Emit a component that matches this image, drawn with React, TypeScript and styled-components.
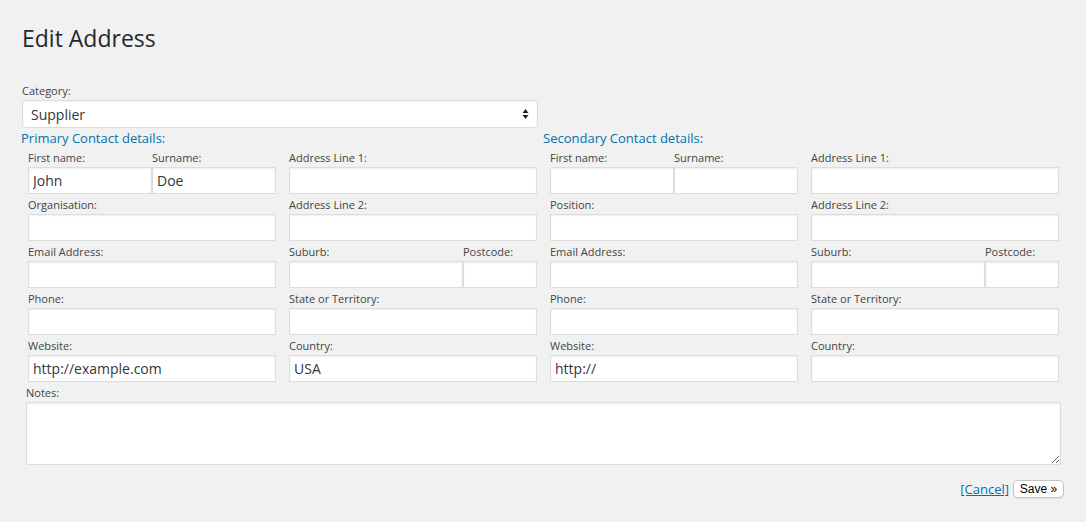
import React from "react";
import styled, { createGlobalStyle } from "styled-components";

const Global = createGlobalStyle`
  html, body { margin: 0; padding: 0; background: #f1f1f1; }
  body { font-family: "Open Sans", "Noto Sans", sans-serif; color: #444; }
  * { box-sizing: border-box; }
`;

const Page = styled.div`
  padding: 23px 0 20px 21px;
  width: 1086px;
`;

const Title = styled.h1`
  margin: 0 0 0 1px;
  font-size: 23px;
  line-height: 30px;
  font-weight: 400;
  color: #23282d;
`;

const Label = styled.label`
  display: block;
  font-size: 11px;
  line-height: 18px;
  padding-top: 2px;
  color: #444;
  white-space: nowrap;
`;

const CategoryBlock = styled.div`
  margin-top: 27px;
  padding-left: 1px;
`;

const SelectWrap = styled.div`
  position: relative;
  width: 516px;
`;

const Select = styled.select`
  appearance: none;
  -webkit-appearance: none;
  width: 100%;
  height: 28px;
  border: 1px solid #ddd;
  border-radius: 4px;
  background: #fff;
  box-shadow: inset 0 1px 2px rgba(0, 0, 0, 0.05);
  font-family: "Open Sans", sans-serif;
  font-size: 14px;
  color: #32373c;
  padding: 0 0 0 8px;
  outline: none;
`;

const Arrows = styled.svg`
  position: absolute;
  right: 9px;
  top: 8px;
  pointer-events: none;
`;

const Sections = styled.div`
  display: grid;
  grid-template-columns: 516px 516px;
  column-gap: 6px;
`;

const Section = styled.section``;

const SectionHeading = styled.h3`
  margin: 1px 0 0;
  font-size: 13px;
  line-height: 18px;
  font-weight: 400;
  color: #0073aa;
`;

const FieldGrid = styled.div`
  display: grid;
  grid-template-columns: 248px 248px;
  column-gap: 13px;
  padding-left: 7px;
`;

const Split = styled.div<{ $cols: string }>`
  display: grid;
  grid-template-columns: ${(p) => p.$cols};
`;

const Field = styled.div``;

const Input = styled.input`
  display: block;
  width: 100%;
  height: 27px;
  border: 1px solid #ddd;
  background: #fff;
  box-shadow: inset 0 1px 2px rgba(0, 0, 0, 0.07);
  font-family: "Open Sans", sans-serif;
  font-size: 14px;
  color: #32373c;
  padding: 0 4px;
  margin: 0;
  outline: none;
  border-radius: 0;
`;

const NotesBlock = styled.div`
  padding-left: 5px;
`;

const TextArea = styled.textarea`
  display: block;
  width: 1035px;
  height: 63px;
  border: 1px solid #ddd;
  background: #fff;
  box-shadow: inset 0 1px 2px rgba(0, 0, 0, 0.07);
  margin: 0;
  outline: none;
  font-family: "Open Sans", sans-serif;
`;

const Footer = styled.div`
  display: flex;
  justify-content: flex-end;
  align-items: center;
  gap: 4px;
  width: 1043px;
  margin-top: 15px;
`;

const CancelLink = styled.a`
  font-size: 13px;
  line-height: 18px;
  color: #0073aa;
  text-decoration: underline;
  cursor: pointer;
`;

const SaveButton = styled.button`
  height: 18px;
  width: 51px;
  padding: 0;
  border: 1px solid #c4c4c4;
  border-radius: 5px;
  background: #fff;
  font-family: "Liberation Sans", Arial, sans-serif;
  font-size: 12px;
  color: #000;
  line-height: 16px;
  box-shadow: 0 1px 1px rgba(0, 0, 0, 0.08);
`;

type F = { label: string; value?: string };

const TextField = ({ label, value }: F) => (
  <Field>
    <Label>{label}</Label>
    <Input defaultValue={value ?? ""} />
  </Field>
);

const PairField = ({ a, b, cols }: { a: F; b: F; cols: string }) => (
  <Split $cols={cols}>
    <TextField {...a} />
    <TextField {...b} />
  </Split>
);

type SectionData = {
  heading: string;
  first: string;
  surname: string;
  org: string;
  website: string;
  country: string;
};

const ContactSection = ({ d }: { d: SectionData }) => (
  <Section>
    <SectionHeading>{d.heading}</SectionHeading>
    <FieldGrid>
      <PairField cols="124px 124px" a={{ label: "First name:", value: d.first }} b={{ label: "Surname:", value: d.surname }} />
      <TextField label="Address Line 1:" />
      <TextField label={d.org} />
      <TextField label="Address Line 2:" />
      <TextField label="Email Address:" />
      <PairField cols="174px 74px" a={{ label: "Suburb:" }} b={{ label: "Postcode:" }} />
      <TextField label="Phone:" />
      <TextField label="State or Territory:" />
      <TextField label="Website:" value={d.website} />
      <TextField label="Country:" value={d.country} />
    </FieldGrid>
  </Section>
);

export default function App() {
  const primary: SectionData = {
    heading: "Primary Contact details:",
    first: "John",
    surname: "Doe",
    org: "Organisation:",
    website: "http://example.com",
    country: "USA",
  };
  const secondary: SectionData = {
    heading: "Secondary Contact details:",
    first: "",
    surname: "",
    org: "Position:",
    website: "http://",
    country: "",
  };
  return (
    <>
      <Global />
      <Page>
        <Title>Edit Address</Title>
        <CategoryBlock>
          <Label>Category:</Label>
          <SelectWrap>
            <Select defaultValue="Supplier">
              <option>Supplier</option>
              <option>Customer</option>
            </Select>
            <Arrows width="7" height="12" viewBox="0 0 7 12">
              <path d="M3.5 1 L6.5 5 L0.5 5 Z" fill="#222" />
              <path d="M3.5 11 L6.5 7 L0.5 7 Z" fill="#222" />
            </Arrows>
          </SelectWrap>
        </CategoryBlock>
        <Sections>
          <ContactSection d={primary} />
          <ContactSection d={secondary} />
        </Sections>
        <NotesBlock>
          <Label>Notes:</Label>
          <TextArea />
        </NotesBlock>
        <Footer>
          <CancelLink>[Cancel]</CancelLink>
          <SaveButton>Save »</SaveButton>
        </Footer>
      </Page>
    </>
  );
}
